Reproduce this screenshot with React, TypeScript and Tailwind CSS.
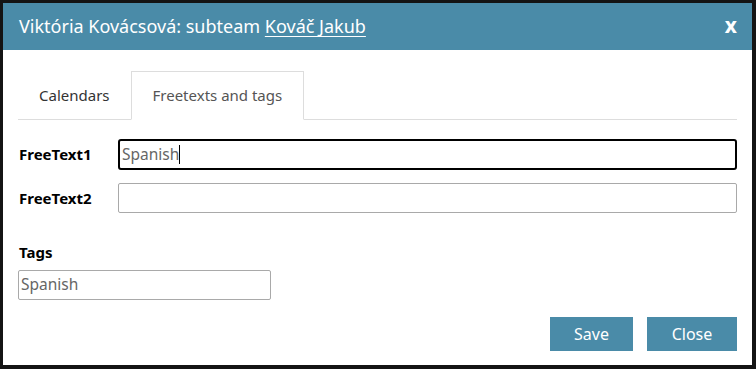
import React from "react";

const font = { fontFamily: '"Segoe UI", "Noto Sans", "Open Sans", sans-serif' };

const App: React.FC = () => {
  return (
    <div
      className="w-[756px] h-[369px] bg-[#141414] border-l-[3px] border-t-[3px] border-r-[4px] border-b-[4px] border-[#141414]"
      style={font}
    >
      <div className="w-full h-full bg-white flex flex-col">
        {/* header */}
        <div className="h-[47px] bg-[#4a8ba8] flex items-center justify-between pl-4 pr-[15px]">
          <h1 className="text-[18px] text-white font-normal">
            Viktória Kovácsová: subteam <span className="underline underline-offset-[3px]">Kováč Jakub</span>
          </h1>
          <button className="text-white text-[21px] font-bold leading-none pb-[3px]">x</button>
        </div>

        <div className="flex flex-col pl-[15px] pr-[15px] pt-[21px] flex-1">
          {/* tabs */}
          <div className="flex border-b border-[#dddddd] h-[49px]">
            <div className="px-5 border border-transparent flex items-center text-[15px] text-[#333]">Calendars</div>
            <div className="px-[21px] border border-[#dddddd] border-b-white -mb-px flex items-center text-[15px] text-[#555] bg-white">
              Freetexts and tags
            </div>
          </div>

          {/* freetext rows */}
          <div className="flex items-center mt-[19px]">
            <label className="w-[100px] pl-px text-[15px] font-bold text-black">FreeText1</label>
            <div className="flex-1 h-[31px] border-2 border-black rounded-[3px] flex items-center pl-[2px] text-[15.5px] text-[#666]">
              Spanish<span className="w-px h-[19px] bg-black"></span>
            </div>
          </div>
          <div className="flex items-center mt-[13px]">
            <label className="w-[100px] pl-px text-[15px] font-bold text-black">FreeText2</label>
            <div className="flex-1 h-[30px] border border-[#a9a9a9] rounded-[2px]"></div>
          </div>

          {/* tags */}
          <label className="mt-[28px] pl-px text-[15px] font-bold text-black">Tags</label>
          <div className="mt-[6px] w-[253px] h-[30px] border border-[#a9a9a9] rounded-[2px] flex items-center pl-[2px] text-[15.5px] text-[#666]">
            Spanish
          </div>

          {/* buttons */}
          <div className="flex justify-end gap-[14px] mt-[17px]">
            <button className="w-[83px] h-[34px] bg-[#4a8ba8] text-white text-[16px]">Save</button>
            <button className="w-[90px] h-[34px] bg-[#4a8ba8] text-white text-[16px]">Close</button>
          </div>
        </div>
      </div>
    </div>
  );
};

export default App;
